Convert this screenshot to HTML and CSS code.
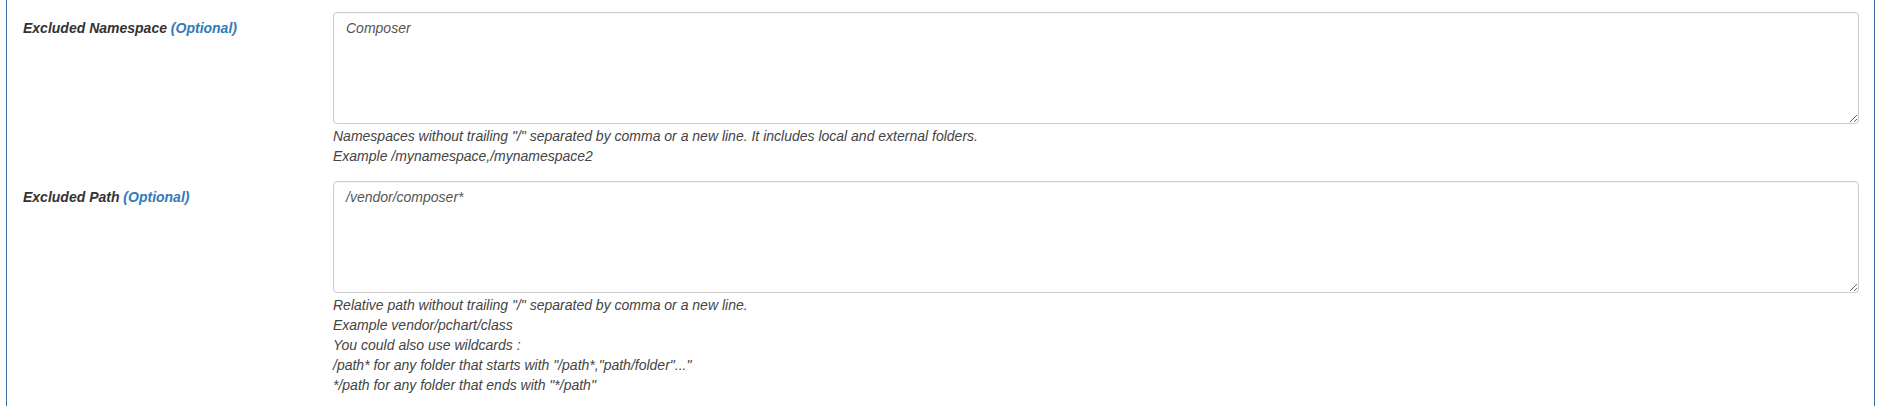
FILE: index.html
```html
<!DOCTYPE html>
<html>
<head>
<meta charset="utf-8">
<link rel="stylesheet" href="styles.css">
</head>
<body>
<div class="panel">
  <div class="form-row">
    <label class="label">Excluded Namespace <span class="opt">(Optional)</span></label>
    <div class="field">
      <textarea class="input">Composer</textarea>
      <div class="help">Namespaces without trailing "/" separated by comma or a new line. It includes local and external folders.<br>Example /mynamespace,/mynamespace2</div>
    </div>
  </div>
  <div class="form-row">
    <label class="label">Excluded Path <span class="opt">(Optional)</span></label>
    <div class="field">
      <textarea class="input">/vendor/composer*</textarea>
      <div class="help">Relative path without trailing "/" separated by comma or a new line.<br>Example vendor/pchart/class<br>You could also use wildcards :<br>/path* for any folder that starts with "/path*,"path/folder"..."<br>*/path for any folder that ends with "*/path"</div>
    </div>
  </div>
</div>
</body>
</html>
```
FILE: styles.css
```css
html, body {
  margin: 0;
  padding: 0;
  background: #fff;
  height: 100%;
}
body {
  font-family: "Liberation Sans", Arial, sans-serif;
  font-size: 14px;
  color: #333;
}
.panel {
  margin: 0 11px 0 6px;
  border-left: 1px solid #3a6f9f;
  border-right: 1px solid #3a6f9f;
  min-height: 100%;
  box-sizing: border-box;
  padding: 12px 15px 0 16px;
}
.form-row {
  display: grid;
  grid-template-columns: 310px 1fr;
  margin-bottom: 15px;
}
.label {
  font-weight: bold;
  font-style: italic;
  line-height: 20px;
  padding-top: 6px;
  color: #333;
}
.opt {
  color: #337ab7;
}
.field {
  display: flex;
  flex-direction: column;
}
.input {
  display: block;
  box-sizing: border-box;
  width: 100%;
  height: 112px;
  margin: 0;
  padding: 5px 12px;
  border: 1px solid #ccc;
  border-radius: 4px;
  font-family: "Liberation Sans", Arial, sans-serif;
  font-size: 14px;
  font-style: italic;
  line-height: 20px;
  color: #555;
  background: #fff;
  box-shadow: inset 0 1px 1px rgba(0,0,0,0.04);
}
.help {
  margin-top: 2px;
  font-style: italic;
  line-height: 20px;
  color: #444;
}
```
